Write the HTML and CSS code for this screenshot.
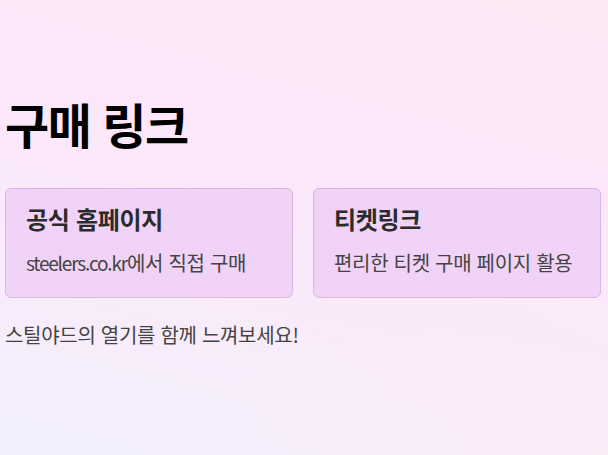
FILE: index.html
```html
<!DOCTYPE html>
<html lang="ko">
<head>
<meta charset="utf-8">
<link rel="stylesheet" href="styles.css">
</head>
<body>
<main class="page">
  <h1 class="title">구매 링크</h1>
  <div class="cards">
    <div class="card">
      <h2 class="card-title">공식 홈페이지</h2>
      <p class="card-desc"><span class="latin">steelers.co.kr</span>에서 직접 구매</p>
    </div>
    <div class="card">
      <h2 class="card-title">티켓링크</h2>
      <p class="card-desc">편리한 티켓 구매 페이지 활용</p>
    </div>
  </div>
  <p class="footer">스틸야드의 열기를 함께 느껴보세요!</p>
</main>
</body>
</html>
```
FILE: styles.css
```css
html, body {
  margin: 0;
  height: 100%;
}
body {
  font-family: "Noto Sans CJK KR", sans-serif;
  background:
    radial-gradient(ellipse at 100% 100%, rgba(252, 236, 248, 0.9) 0%, rgba(252, 236, 248, 0) 45%),
    linear-gradient(195deg, #fde9f5 0%, #fce6fa 35%, #f9ebfa 65%, #f3f0fd 100%);
  color: #333;
}
.page {
  padding: 90px 7px 0 5px;
}
.title {
  margin: 0;
  font-size: 48px;
  font-weight: 700;
  letter-spacing: -1.5px;
  color: #000;
  line-height: 1.4;
}
.cards {
  display: grid;
  grid-template-columns: 1fr 1fr;
  gap: 20px;
  margin-top: 31px;
}
.card {
  background: #f0d3f6;
  border: 1px solid #d9b6e2;
  border-radius: 6px;
  padding: 13px 20px 20px;
}
.card-title {
  margin: 0;
  font-size: 24px;
  font-weight: 700;
  letter-spacing: -0.3px;
  color: #2b2b2b;
  line-height: 1.4;
}
.card-desc {
  margin: 13px 0 0;
  font-size: 20px;
  letter-spacing: -0.3px;
  color: #444;
  line-height: 1.4;
}
.latin {
  font-size: 19px;
  letter-spacing: -1.2px;
}
.footer {
  margin: 23px 0 0;
  font-size: 20px;
  letter-spacing: -0.3px;
  color: #444;
  line-height: 1.4;
}
```
